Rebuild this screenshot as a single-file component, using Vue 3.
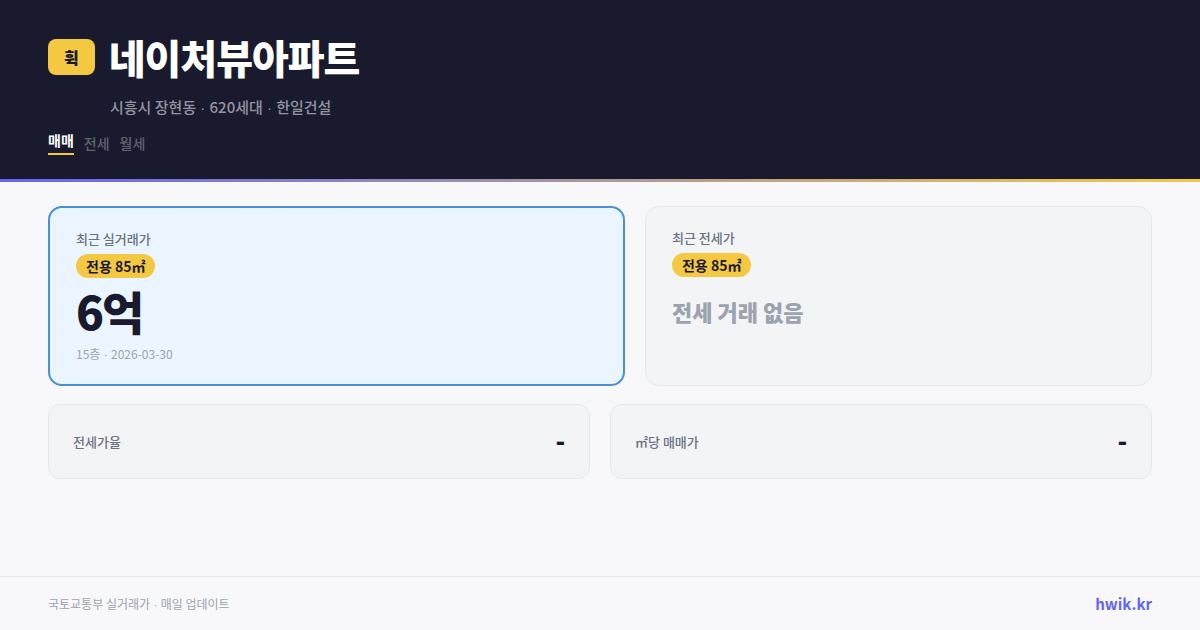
<script setup>
import { ref } from 'vue';

const apartment = {
  name: '네이처뷰아파트',
  summary: ['시흥시 장현동', '620세대', '한일건설'],
  meta: ['15층', '2026-03-30']
};
const source = ['국토교통부 실거래가', '매일 업데이트'];

const tabs = ['매매', '전세', '월세'];
const activeTab = ref('매매');

const stats = [
  { label: '전세가율', value: '-' },
  { label: '㎡당 매매가', value: '-' }
];
</script>

<template>
  <div class="page">
    <header class="header">
      <div class="title-row">
        <span class="logo">휙</span>
        <h1 class="title">{{ apartment.name }}</h1>
      </div>
      <p class="summary">
        <template v-for="(part, i) in apartment.summary" :key="part">
          <span v-if="i" class="dot"> · </span>{{ part }}
        </template>
      </p>
      <nav class="tabs">
        <button
          v-for="tab in tabs"
          :key="tab"
          type="button"
          class="tab"
          :class="{ active: tab === activeTab }"
          @click="activeTab = tab"
        >{{ tab }}</button>
      </nav>
    </header>
    <div class="accent"></div>

    <main class="content">
      <div class="prices">
        <section class="card sale">
          <p class="label">최근 실거래가</p>
          <span class="area">전용 85㎡</span>
          <p class="price">6억</p>
          <p class="meta">
            <template v-for="(part, i) in apartment.meta" :key="part">
              <span v-if="i" class="dot"> · </span>{{ part }}
            </template>
          </p>
        </section>
        <section class="card lease">
          <p class="label">최근 전세가</p>
          <span class="area">전용 85㎡</span>
          <p class="empty">전세 거래 없음</p>
        </section>
      </div>
      <div class="stats">
        <section v-for="stat in stats" :key="stat.label" class="stat">
          <span class="label">{{ stat.label }}</span>
          <strong class="stat-value">{{ stat.value }}</strong>
        </section>
      </div>
    </main>

    <footer class="footer">
      <p class="source">
        <template v-for="(part, i) in source" :key="part">
          <span v-if="i" class="dot"> · </span>{{ part }}
        </template>
      </p>
      <a class="site" href="https://hwik.kr">hwik.kr</a>
    </footer>
  </div>
</template>

<style>
body {
  margin: 0;
  background: #f8f8fb;
}
</style>

<style scoped>
.page {
  display: flex;
  flex-direction: column;
  min-height: 100vh;
  color: #1a1a2e;
  font-family: 'Noto Sans CJK KR', sans-serif;
}

.page * {
  box-sizing: border-box;
}

h1,
p {
  margin: 0;
}

.header {
  padding: 28px 48px 24px;
  background: #1a1a2e;
}

.title-row {
  display: flex;
  align-items: center;
  gap: 14px;
}

.logo {
  padding: 6px 16px;
  border-radius: 8px;
  background: #f5c842;
  font-size: 16px;
  font-weight: 900;
  line-height: 24px;
}

.title {
  color: #fff;
  font-size: 40px;
  font-weight: 900;
  line-height: 58px;
  letter-spacing: -1px;
}

.summary {
  margin: 10px 0 0 62px;
  color: #9494a0;
  font-size: 15px;
  font-weight: 500;
  line-height: 22px;
}

.dot {
  font-family: 'Liberation Sans', sans-serif;
  line-height: 1;
  white-space: pre;
}

.tabs {
  display: flex;
  align-items: center;
  gap: 10px;
  margin-top: 12px;
}

.tab {
  padding: 0;
  border: 0;
  background: none;
  color: #62626e;
  font-family: inherit;
  font-size: 14px;
  font-weight: 500;
  line-height: 20px;
}

.tab.active {
  padding-bottom: 3px;
  border-bottom: 2px solid #f5c842;
  color: #fff;
  font-weight: 700;
}

.accent {
  height: 3px;
  background: linear-gradient(90deg, #6366f1, #f5c842);
}

.content {
  display: flex;
  flex: 1;
  flex-direction: column;
  gap: 18px;
  padding: 24px 48px;
}

.prices {
  display: flex;
  gap: 20px;
}

.card {
  min-height: 180px;
  padding: 22px 26px 18px;
  border: 1px solid #e5e7eb;
  border-radius: 14px;
  background: #f3f4f6;
}

.sale {
  flex: 1.15;
  border: 2px solid #4a90d9;
  background: #eaf5ff;
}

.lease {
  flex: 1;
}

.label {
  color: #6b7280;
  font-size: 13px;
  font-weight: 500;
  line-height: 18px;
}

.area {
  display: inline-block;
  margin-top: 6px;
  padding: 2px 10px;
  border-radius: 12px;
  background: #f5c842;
  font-size: 14px;
  font-weight: 700;
  line-height: 20px;
}

.price {
  margin-top: 6px;
  font-size: 46px;
  font-weight: 900;
  line-height: 52px;
  letter-spacing: -2px;
}

.meta {
  margin-top: 8px;
  color: #9ca3af;
  font-size: 12px;
  line-height: 20px;
}

.empty {
  margin-top: 18px;
  color: #9ca3af;
  font-size: 22px;
  font-weight: 900;
  line-height: 32px;
}

.stats {
  display: grid;
  grid-template-columns: 1fr 1fr;
  gap: 20px;
}

.stat {
  display: flex;
  align-items: center;
  justify-content: space-between;
  padding: 20px 24px;
  border: 1px solid #e5e7eb;
  border-radius: 12px;
  background: #f3f4f6;
}

.stat-value {
  font-family: 'Liberation Sans', 'Noto Sans CJK KR', sans-serif;
  font-size: 28px;
  font-weight: 700;
  line-height: 33px;
}

.footer {
  display: flex;
  align-items: center;
  justify-content: space-between;
  padding: 16px 48px;
  border-top: 1px solid #e5e7eb;
}

.source {
  color: #9ca3af;
  font-size: 12px;
  line-height: 18px;
}

.site {
  color: #6366f1;
  font-size: 15px;
  font-weight: 700;
  line-height: 21px;
  text-decoration: none;
}
</style>
